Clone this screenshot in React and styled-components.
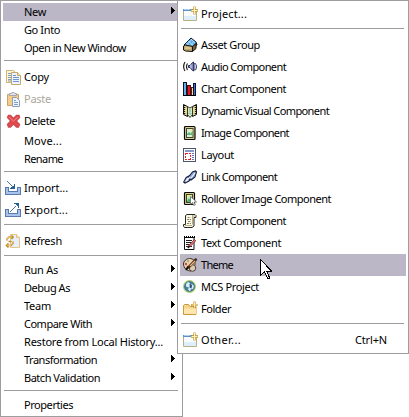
import React, { useLayoutEffect, useRef, useState } from "react";
import styled, { createGlobalStyle } from "styled-components";

const Global = createGlobalStyle`
  * { box-sizing: border-box; }
  body { margin: 0; background: #fff; overflow: hidden; }
`;

const Desktop = styled.div`
  position: relative;
  width: 409px;
  height: 417px;
  background: #fff;
  font-family: "Noto Sans", "DejaVu Sans Condensed", sans-serif;
  font-size: 11px;
  color: #000;
  cursor: default;
`;

const Menu = styled.div`
  width: 183px;
  height: 417px;
  padding: 2px;
  background: #fff;
  border: 1px solid #9d9da1;
`;

const Submenu = styled(Menu)`
  position: absolute;
  left: 177px;
  top: 0;
  width: 232px;
  height: 354px;
`;

const Row = styled.div`
  display: flex;
  align-items: center;
  height: ${(p) => (p.$tall ? 22 : 18)}px;
  padding-left: ${(p) => (p.$sub ? 3 : 2)}px;
  padding-right: ${(p) => (p.$sub ? 19 : 5)}px;
  background: ${(p) => (p.$active ? "#bbb7c7" : "transparent")};
  color: ${(p) => (p.$disabled ? "#aca899" : "#000")};
`;

const IconSlot = styled.span`
  display: flex;
  flex: none;
  width: 16px;
  height: 16px;
`;

const Caption = styled.span`
  flex: none;
  margin-left: 3px;
  line-height: 16px;
  white-space: pre;
`;

const SubCaption = styled(Caption)`
  margin-left: 2px;
`;

const Shortcut = styled(Caption)`
  margin-left: auto;
`;

const Separator = styled.div`
  height: 9px;
  padding: 3px 2px 0 1px;
  &::before {
    content: "";
    display: block;
    height: 1px;
    background: #9d9da1;
  }
`;

const Arrow = styled.svg`
  flex: none;
  width: 4px;
  height: 7px;
  margin: 0 0 3px auto;
`;

const Pointer = styled.svg`
  position: absolute;
  left: 260px;
  top: 259px;
  width: 12px;
  height: 21px;
`;

const Art = styled.svg`
  display: block;
  width: 16px;
  height: 16px;
`;

// Spreads the letters so that the label takes the given width.
function Fitted({ as: Tag = Caption, width, children }) {
  const ref = useRef(null);
  const [spacing, setSpacing] = useState(0);
  useLayoutEffect(() => {
    const natural = ref.current.getBoundingClientRect().width;
    setSpacing((width + 1 - natural) / children.length);
  }, [width, children]);
  return (
    <Tag ref={ref} style={{ letterSpacing: `${spacing}px` }}>
      {children}
    </Tag>
  );
}

const Icon = ({ children, crisp }) => (
  <Art viewBox="0 0 16 16" fill="none" shapeRendering={crisp ? "crispEdges" : "auto"}>
    {children}
  </Art>
);

const icons = {
  copy: (
    <Icon>
      <path d="M1.500 1.500h7l2 2v10h-9z" fill="#fff6d8" stroke="#cfb56f" />
      <path d="M3 4.500h3M3 6.500h3M3 8.500h3M3 10.500h3M3 12h3" stroke="#7b9cc8" />
      <path d="M6.500 3.500h6l3 3v9h-9z" fill="#edf4ff" stroke="#c4a964" />
      <path d="M12.500 3.500v3h3" fill="#f7e4ac" stroke="#c4a964" />
      <path d="M8 6.500h3M8 8.500h6M8 10.500h6M8 12.500h6" stroke="#6f95cb" />
    </Icon>
  ),
  paste: (
    <Icon>
      <path d="M2.500 3.500h11v11h-11z" fill="#f2cd8c" stroke="#cfa165" />
      <path d="M4.500 4.500v-2h2l.5-1h2l.5 1h2v2z" fill="#e4e6ea" stroke="#a3a7b1" />
      <path d="M7.500 6.500h4l3 3v6h-7z" fill="#edf4ff" stroke="#8f9fb6" />
      <path d="M9 9.500h2M9 11.500h4M9 13.500h4" stroke="#7e9fd0" />
    </Icon>
  ),
  remove: (
    <Icon>
      <path d="M3.500 2.500h2L8.500 5.500l3-3H14l.5 2-3.300 3.500 3.300 3.500-1 2.500h-2L8.500 11l-3 3h-2l-1-2.500L5.800 8 2.500 4.500z" fill="#e4484c" stroke="#cf4a50" strokeWidth="1.300" />
      <path d="M4 4l4.500 4L13 4" stroke="#f08a86" />
    </Icon>
  ),
  importing: (
    <Icon crisp>
      <path d="M.5 7.500h3v4h9v-4h3v7H.5z" fill="#a9c3ea" stroke="#5779ae" />
      <path d="M2 1h1v1H2zM3 2h1v1H3zM4 3h1v1H4zM5 4h1v1H5zM6 5h1v1H6zM7 6h1v1H7z" fill="#4e7199" />
      <path d="M10 4v5H5V8h1V7h2V6h1V4z" fill="#245f91" />
    </Icon>
  ),
  exporting: (
    <Icon crisp>
      <path d="M.5 7.500h3v4h9v-4h3v7H.5z" fill="#a9c3ea" stroke="#5779ae" />
      <path d="M5 9h1v1H5zM6 8h1v1H6zM7 7h1v1H7zM8 6h1v1H8zM9 5h1v1H9zM10 4h1v1h-1z" fill="#4e7199" />
      <path d="M9 1h5v5h-1V4h-1V3h-1V2H9z" fill="#245f91" />
    </Icon>
  ),
  refresh: (
    <Icon>
      <path d="M5.500 1.500h6l3 3v10h-9z" fill="#e6effb" stroke="#e2c686" />
      <path d="M11.500 1.500v3h3" fill="#f8e5b0" stroke="#e2c686" />
      <path d="M2 7.500V6l2-2h2.500M6.500 2.500L8 4 6.500 6M8 8.500v2L6 12.500H3M3.500 10.500L1.500 12.500l2 2M3.500 8.500h3" stroke="#c28b2c" strokeWidth="1.700" />
      <path d="M2 7V6l2-2h3M8 9v1.500L6 12.500H3" stroke="#fae093" strokeWidth=".7" />
    </Icon>
  ),
  wizard: (
    <Icon>
      <path d="M.5 3.500h13v11H.5z" fill="#f8fcff" stroke="#bbae82" />
      <path d="M1 10h12v4H1z" fill="#dceffc" />
      <path d="M0 3h10v2H0z" fill="#5b90c9" />
      <path d="M1 3h6v1H1z" fill="#a9d3f5" />
      <path d="M11.500 .5v8M8 4.500h7" stroke="#c49a3c" strokeWidth="2.300" />
      <path d="M11.500 1v7M8.500 4.500h6" stroke="#fff2b5" />
    </Icon>
  ),
  asset: (
    <Icon>
      <path d="M1 8l4-4 3-3 5 4 1 3-5 3z" fill="#5ca9e5" stroke="#0a1d34" />
      <path d="M3 6l4 3M5 4l5 4M8 2l4 4M4 8l5-6M8 8l3-4" stroke="#b9e8ff" strokeWidth=".8" />
      <path d="M.5 9l2-1 7 1.500v5l-7-.5-2-1z" fill="#bda873" stroke="#171108" />
      <path d="M9.500 9.500l3.500-3v5l-3.500 3z" fill="#756440" stroke="#171108" />
      <path d="M2 11h6" stroke="#f1dfaa" />
    </Icon>
  ),
  audio: (
    <Icon>
      <path d="M2 3Q-.8 7.500 2 12M4.500 4.500Q2.500 7.500 4.500 11" stroke="#222" strokeWidth="1.200" />
      <path d="M5.500 6.500h1.500l2.500-3 1-.5v9l-1-.5-2.500-3H5.500z" fill="#7e8ac0" stroke="#272b50" />
      <path d="M8 5.500v4" stroke="#d5dcff" />
      <path d="M11 4.500h1.500l1 2v2.500l-1 2H11z" fill="#c4c7dc" stroke="#4b5079" />
    </Icon>
  ),
  chart: (
    <Icon crisp>
      <path d="M.5 1.500h3v13h-3z" fill="#67aee5" stroke="#07152c" />
      <path d="M4.500 4.500h3v10h-3z" fill="#df1827" stroke="#59070b" />
      <path d="M8.500 6.500h2v8h-2z" fill="#ffd29c" stroke="#4c2718" />
      <path d="M10.500 2.500h2v12h-2z" fill="#3971d5" stroke="#07152c" />
      <path d="M0 14.500h13" stroke="#000" />
    </Icon>
  ),
  visual: (
    <Icon>
      <path d="M.5 1.500l4 2v10l-4-2zM9.500 3.500l4-2v10l-4 2z" fill="#d6cf98" stroke="#111" />
      <path d="M4.500 3.500L7 5l2.500-1.500v8L7 14.500l-2.500-3z" fill="#dcecc1" stroke="#34352b" />
      <path d="M1.500 2v10M12.500 2v10" stroke="#111" strokeWidth="1.400" strokeDasharray="1 1" />
      <path d="M3 5v5M11 5v5" stroke="#f2e58c" strokeWidth="1.500" />
      <path d="M7 6v3M5.500 10l3 1" stroke="#8ec4bd" strokeWidth="1.500" />
    </Icon>
  ),
  image: (
    <Icon>
      <rect x="1.500" y="1.500" width="10.500" height="13" rx="1" fill="#d9ce96" stroke="#080804" strokeWidth="1.200" />
      <rect x="3.500" y="3.500" width="6.500" height="9" fill="#d5f0e0" stroke="#48442a" />
      <path d="M4 9l2-2 1.500 1.500L9.500 6v4H4z" fill="#62b875" />
      <path d="M7.500 4.500h2v2h-2z" fill="#f5ef75" />
    </Icon>
  ),
  layout: (
    <Icon crisp>
      <path d="M.5 1.500h12v13H.5z" fill="#fff" stroke="#4c566a" />
      <path d="M2 3h9v2H2z" fill="#8199cd" />
      <path d="M2.500 6.500h5v6h-5z" stroke="#df252d" strokeDasharray="2 1" />
      <path d="M9 6.500h2M9 8.500h2M9 10.500h2M9 12.500h2" stroke="#5c74aa" />
    </Icon>
  ),
  link: (
    <Icon>
      <path d="M.7 13l2.500-4.500L7 6.500 8.500 8 6 12l-4 2z" fill="#b6c9f2" stroke="#171d3e" strokeWidth="1.100" />
      <path d="M5.500 8l4-5 3-1 1 1-1.500 5L8 11l-2-1z" fill="#91a5d6" stroke="#171d3e" strokeWidth="1.100" />
      <path d="M3 12l4-4M8 9l4-5" stroke="#eef5ff" strokeWidth="1.200" />
    </Icon>
  ),
  rollover: (
    <Icon>
      <rect x="1.500" y="1.500" width="10" height="12" rx="1" fill="#d9ce96" stroke="#080804" strokeWidth="1.200" />
      <rect x="3.500" y="3.500" width="6" height="8" fill="#b9edcb" stroke="#48442a" />
      <path d="M4 10l2-3 1 2 2-3v5H4z" fill="#4bb465" />
      <path d="M4 4h4l-4 3z" fill="#f5ef75" />
      <path d="M7.500 5.500v8l2-2 1.300 3 1.500-.7-1.200-2.800h2.500z" fill="#fff" stroke="#55565f" strokeWidth=".7" />
    </Icon>
  ),
  script: (
    <Icon>
      <path d="M2.500 2.500l1.500-1h8l1 1v2h-2v8.500l-2 1.500H1.500L.5 13v-1.500h2V5z" fill="#fffbe4" stroke="#282720" />
      <path d="M9.500 2v9.500M2 12.500h7M11 2v2" stroke="#b2ab8b" />
      <path d="M4.500 4.500h3M4 6.500h4M5 8.500h3M4 10.500h4" stroke="#86826e" strokeDasharray="2 .7" />
    </Icon>
  ),
  text: (
    <Icon>
      <path d="M1.500 2.500h9.500v12h-9.500z" fill="#fff" stroke="#111" />
      <path d="M1 2h11" stroke="#000" strokeWidth="2" strokeDasharray="1 1" />
      <path d="M3 5.500h6M3 7.500h5M3 9.500h3M3 11.500h6" stroke="#202020" />
      <path d="M5 12.500l1-2.500 5.500-5.500L12.700 6 7 11.500z" fill="#e97776" stroke="#73272b" strokeWidth=".8" />
      <path d="M5 13l1.500-2" stroke="#111" strokeWidth="1.300" />
    </Icon>
  ),
  theme: (
    <Icon>
      <path d="M.5 7c0-3 3-5.500 6-5.500 4 0 6 3 5.500 6-.4 2-2.500 1-3 2.500-.5 2 1 3-1 4C4 14 .5 11 .5 7z" fill="#ead3b1" stroke="#3a3027" />
      <circle cx="5" cy="4" r="1.200" fill="#a9ad83" />
      <circle cx="3" cy="7" r="1.200" fill="#ba5152" />
      <circle cx="5" cy="10" r="1.300" fill="#be2d26" />
      <circle cx="9.500" cy="11" r="3.300" fill="#dccbb2" stroke="#514238" />
      <path d="M5 11l7.500-8 .7-1.500" stroke="#472b20" strokeWidth="2.600" />
      <path d="M7 9l5-5" stroke="#f4b773" strokeWidth="1.200" />
      <path d="M3 13l2-3" stroke="#111" strokeWidth="2" />
    </Icon>
  ),
  mcs: (
    <Icon>
      <circle cx="6.500" cy="7.500" r="5.800" fill="#4d82b3" stroke="#a9d26c" strokeWidth="1.400" />
      <circle cx="6.500" cy="7.500" r="4.800" stroke="#315f84" strokeWidth=".8" />
      <path d="M3 5l2-2 2 1-1 2 3-1 2 2-1 3H8l-1 2.500L5 10.500l1-2-3-1z" fill="#d9edf3" />
      <path d="M7 5l2 1-.5 3.500-2-1z" fill="#294e71" />
    </Icon>
  ),
  folder: (
    <Icon>
      <path d="M.5 13.500v-9l1-1h4l1.500 2h6v8z" fill="#f6d68c" stroke="#cc973d" />
      <path d="M1 7.500h12v5.500H1z" fill="#ffe6ac" />
      <path d="M11.500 .5v6.500M8 4h6.500" stroke="#c38f33" strokeWidth="2.200" />
      <path d="M11.500 1v5.500M8.500 4h5.500" stroke="#fff2b5" />
    </Icon>
  ),
};

const mainItems = [
  { label: "New", width: 21, arrow: true, active: true },
  { label: "Go Into", width: 35 },
  { label: "Open in New Window", width: 101 },
  null,
  { label: "Copy", width: 24, icon: "copy" },
  { label: "Paste", width: 26, icon: "paste", disabled: true },
  { label: "Delete", width: 30, icon: "remove" },
  { label: "Move...", width: 37 },
  { label: "Rename", width: 38 },
  null,
  { label: "Import...", width: 43, icon: "importing" },
  { label: "Export...", width: 43, icon: "exporting" },
  null,
  { label: "Refresh", width: 37, icon: "refresh" },
  null,
  { label: "Run As", width: 33, arrow: true },
  { label: "Debug As", width: 45, arrow: true },
  { label: "Team", width: 26, arrow: true },
  { label: "Compare With", width: 67, arrow: true },
  { label: "Restore from Local History...", width: 138 },
  { label: "Transformation", width: 72, arrow: true },
  { label: "Batch Validation", width: 75, arrow: true },
  null,
  { label: "Properties", width: 48 },
];

const newItems = [
  { label: "Project...", width: 45, icon: "wizard" },
  null,
  { label: "Asset Group", width: 58, icon: "asset" },
  { label: "Audio Component", width: 84, icon: "audio" },
  { label: "Chart Component", width: 84, icon: "chart" },
  { label: "Dynamic Visual Component", width: 127, icon: "visual" },
  { label: "Image Component", width: 87, icon: "image" },
  { label: "Layout", width: 32, icon: "layout" },
  { label: "Link Component", width: 75, icon: "link" },
  { label: "Rollover Image Component", width: 129, icon: "rollover" },
  { label: "Script Component", width: 84, icon: "script" },
  { label: "Text Component", width: 79, icon: "text" },
  { label: "Theme", width: 31, icon: "theme", active: true },
  { label: "MCS Project", width: 57, icon: "mcs" },
  { label: "Folder", width: 29, icon: "folder" },
  null,
  { label: "Other...", width: 39, icon: "wizard", shortcut: "Ctrl+N" },
];

const MenuRows = ({ items, sub }) =>
  items.map((item, i) =>
    item ? (
      <Row key={i} $tall={!!item.icon} $sub={sub} $active={item.active} $disabled={item.disabled}>
        <IconSlot>{icons[item.icon]}</IconSlot>
        <Fitted as={sub ? SubCaption : Caption} width={item.width}>
          {item.label}
        </Fitted>
        {item.shortcut && (
          <Fitted as={Shortcut} width={31}>
            {item.shortcut}
          </Fitted>
        )}
        {item.arrow && (
          <Arrow viewBox="0 0 4 7" shapeRendering="crispEdges">
            <path d="M0 0h1v1h1v1h1v1h1v1H3v1H2v1H1v1H0z" fill="#000" />
          </Arrow>
        )}
      </Row>
    ) : (
      <Separator key={i} />
    )
  );

export default function App() {
  return (
    <>
      <Global />
      <Desktop>
        <Menu>
          <MenuRows items={mainItems} />
        </Menu>
        <Submenu>
          <MenuRows items={newItems} sub />
        </Submenu>
        <Pointer viewBox="0 0 12 21" shapeRendering="crispEdges">
          <path d="M.5.500v16l4-4 3 7h2v-1l-3-6.500h5z" fill="#fff" stroke="#000" />
        </Pointer>
      </Desktop>
    </>
  );
}
